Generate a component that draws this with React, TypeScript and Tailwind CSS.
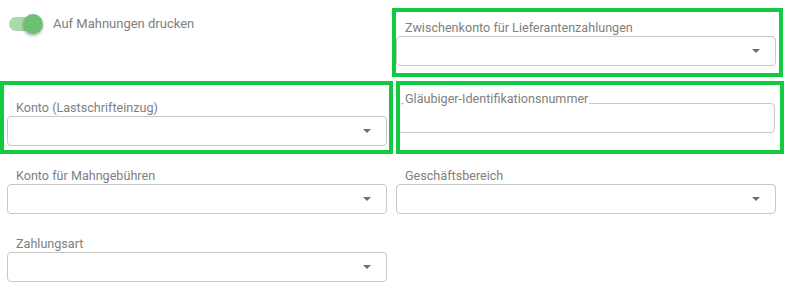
import React from "react";

const font = "font-['Roboto','Liberation_Sans',sans-serif]";

function Arrow() {
  return (
    <svg width="8" height="4" viewBox="0 0 8 4" className="block">
      <path d="M0 0H8L4 4Z" fill="#6e6e6e" />
    </svg>
  );
}

function SelectField({ label }: { label: string }) {
  return (
    <div className="w-[380px]">
      <div className={`${font} text-[12.6px] leading-[16px] text-[#808080] pl-[9px] whitespace-nowrap`}>{label}</div>
      <div className="h-[30px] rounded-[4px] border border-[#c8c8c8] bg-white flex items-center justify-end pr-[15px]">
        <Arrow />
      </div>
    </div>
  );
}

function Toggle() {
  return (
    <div className="flex items-center pt-[14px] pl-[2px]">
      <div className="relative w-[34px] h-[20px] flex items-center">
        <div className="w-[32px] h-[14px] rounded-full bg-[#a8d8ab]" />
        <div className="absolute right-0 top-0 w-[20px] h-[20px] rounded-full bg-[#6cc070] shadow-[0_2px_3px_rgba(0,0,0,0.3)]" />
      </div>
      <span className={`${font} ml-[10px] text-[13px] leading-[16px] text-[#808080]`}>Auf Mahnungen drucken</span>
    </div>
  );
}

export default function App() {
  return (
    <div className="relative w-[788px] h-[290px] bg-white overflow-hidden">
      <div className="flex flex-col pl-[7px]">
        {/* Row 1 */}
        <div className="flex gap-[9px] h-[91px]">
          <div className="w-[380px]">
            <Toggle />
          </div>
          <div className="pt-[20px]">
            <SelectField label="Zwischenkonto für Lieferantenzahlungen" />
          </div>
        </div>
        {/* Row 2 */}
        <div className="flex gap-[9px] h-[77px]">
          <div className="pt-[9px]">
            <SelectField label="Konto (Lastschrifteinzug)" />
          </div>
          <div className="w-[380px] pl-[2px]">
            <fieldset className="w-[377px] h-[42px] rounded-[4px] border border-[#c8c8c8] bg-white">
              <legend className={`${font} ml-[5px] px-[1px] pb-[9px] text-[12.6px] leading-[16px] text-[#808080] whitespace-nowrap`}>
                Gläubiger-Identifikationsnummer
              </legend>
            </fieldset>
          </div>
        </div>
        {/* Row 3 */}
        <div className="flex gap-[9px] h-[68px]">
          <SelectField label="Konto für Mahngebühren" />
          <SelectField label="Geschäftsbereich" />
        </div>
        {/* Row 4 */}
        <div className="flex gap-[9px]">
          <SelectField label="Zahlungsart" />
        </div>
      </div>

      {/* highlight overlays */}
      <div className="absolute left-[392px] top-[8px] w-[391px] h-[69px] border-[4px] border-[#12c944] pointer-events-none" />
      <div className="absolute left-[0px] top-[81px] w-[393px] h-[73px] border-[4px] border-[#12c944] pointer-events-none" />
      <div className="absolute left-[396px] top-[81px] w-[388px] h-[73px] border-[4px] border-[#12c944] pointer-events-none" />
    </div>
  );
}
